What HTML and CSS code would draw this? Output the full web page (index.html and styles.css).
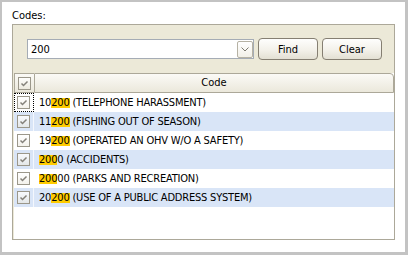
FILE: index.html
```html
<!DOCTYPE html>
<html lang="en">
<head>
    <meta charset="UTF-8">
    <title>Codes</title>
    <link rel="stylesheet" href="styles.css">
</head>
<body>
    <div class="window">
        <div class="caption">Codes:</div>
        <div class="panel">
            <div class="toolbar">
                <div class="combo">
                    <span>200</span>
                    <span class="combo-btn">
                        <svg width="8" height="5" viewBox="0 0 8 5"><path d="M0.5 0.5 L4 4 L7.5 0.5" fill="none" stroke="#7d7a70" stroke-width="1"/></svg>
                    </span>
                </div>
                <button class="btn">Find</button>
                <button class="btn">Clear</button>
            </div>
            <div class="grid">
                <div class="grid-head">
                    <div class="head-check"><span class="cb"><svg width="11" height="11" viewBox="0 0 11 11"><path d="M2.5 5.5 L4.5 7.5 L8.5 3.5" fill="none" stroke="#84817a" stroke-width="1.5"/></svg></span></div>
                    <div class="head-code">Code</div>
                </div>
                <div class="row">
                    <div class="cell-check focus"><span class="cb"><svg width="11" height="11" viewBox="0 0 11 11"><path d="M2.5 5.5 L4.5 7.5 L8.5 3.5" fill="none" stroke="#84817a" stroke-width="1.5"/></svg></span></div>
                    <div class="cell-text">10<span class="hit">200</span> (TELEPHONE HARASSMENT)</div>
                </div>
                <div class="row alt">
                    <div class="cell-check"><span class="cb"><svg width="11" height="11" viewBox="0 0 11 11"><path d="M2.5 5.5 L4.5 7.5 L8.5 3.5" fill="none" stroke="#84817a" stroke-width="1.5"/></svg></span></div>
                    <div class="cell-text">11<span class="hit">200</span> (FISHING OUT OF SEASON)</div>
                </div>
                <div class="row">
                    <div class="cell-check"><span class="cb"><svg width="11" height="11" viewBox="0 0 11 11"><path d="M2.5 5.5 L4.5 7.5 L8.5 3.5" fill="none" stroke="#84817a" stroke-width="1.5"/></svg></span></div>
                    <div class="cell-text">19<span class="hit">200</span> (OPERATED AN OHV W/O A SAFETY)</div>
                </div>
                <div class="row alt">
                    <div class="cell-check"><span class="cb"><svg width="11" height="11" viewBox="0 0 11 11"><path d="M2.5 5.5 L4.5 7.5 L8.5 3.5" fill="none" stroke="#84817a" stroke-width="1.5"/></svg></span></div>
                    <div class="cell-text"><span class="hit">200</span>0 (ACCIDENTS)</div>
                </div>
                <div class="row">
                    <div class="cell-check"><span class="cb"><svg width="11" height="11" viewBox="0 0 11 11"><path d="M2.5 5.5 L4.5 7.5 L8.5 3.5" fill="none" stroke="#84817a" stroke-width="1.5"/></svg></span></div>
                    <div class="cell-text"><span class="hit">200</span>00 (PARKS AND RECREATION)</div>
                </div>
                <div class="row alt">
                    <div class="cell-check"><span class="cb"><svg width="11" height="11" viewBox="0 0 11 11"><path d="M2.5 5.5 L4.5 7.5 L8.5 3.5" fill="none" stroke="#84817a" stroke-width="1.5"/></svg></span></div>
                    <div class="cell-text">20<span class="hit">200</span> (USE OF A PUBLIC ADDRESS SYSTEM)</div>
                </div>
            </div>
        </div>
    </div>
</body>
</html>
```

FILE: styles.css
```css
body { margin: 0; font-family: "DejaVu Sans Condensed", "DejaVu Sans", sans-serif; font-size: 11px; color: #000; }
.window { box-sizing: border-box; width: 408px; height: 255px; background: #fff; border: solid #c3c3c3; border-width: 2px 3px 3px 2px; padding: 7px 0 0 10px; }
.caption { height: 15px; line-height: 14px; }
.panel { box-sizing: border-box; width: 383px; height: 216px; border: 1px solid #aca899; background: #ece9d8; display: flex; flex-direction: column; }
.toolbar { display: flex; align-items: center; gap: 4px; height: 22px; padding: 13px 0 0 14px; }
.combo { box-sizing: border-box; width: 227px; height: 20px; border: 1px solid #a5acb5; background: #fff; display: flex; align-items: center; justify-content: space-between; padding: 0 0 0 3px; }
.combo-btn { box-sizing: border-box; width: 16px; height: 17px; border: 1px solid #b6b2a4; border-radius: 2px; background: linear-gradient(#fff, #f2f0e8); display: flex; align-items: center; justify-content: center; }
.btn { box-sizing: border-box; width: 60px; height: 22px; padding: 0; border: 1px solid #857f72; border-radius: 4px; background: linear-gradient(#fefefd, #f3f1ea 55%, #e3e0d3); font: inherit; color: #000; }
.grid { flex: 1; margin: 13px 0 0 1px; background: #fff; }
.grid-head { display: flex; height: 20px; }
.head-check { box-sizing: border-box; width: 20px; border: 1px solid #aca899; border-right: 0; background: linear-gradient(#fbfaf6, #ebe8db); display: flex; align-items: center; justify-content: center; }
.head-code { box-sizing: border-box; flex: 1; border: 1px solid #aca899; border-top-right-radius: 4px; background: linear-gradient(#fbfaf6, #ebe8db); text-align: center; line-height: 18px; }
.row { display: flex; height: 19px; }
.row.alt { background: #d9e5f7; }
.cell-check { box-sizing: border-box; width: 20px; border-right: 1px solid rgba(255,255,255,0.7); display: flex; align-items: center; justify-content: center; }
.cell-check.focus { outline: 1px dotted #000; outline-offset: -1px; }
.cell-text { padding-left: 5px; line-height: 19px; white-space: nowrap; letter-spacing: -0.2px; }
.hit { display: inline-block; background: #ffcc00; line-height: 10px; }
.cb { box-sizing: border-box; display: block; width: 13px; height: 13px; border: 1px solid #9b978a; background: linear-gradient(rgba(255,255,255,0.8), rgba(236,233,222,0.6)); }
.cb svg { display: block; }
```
